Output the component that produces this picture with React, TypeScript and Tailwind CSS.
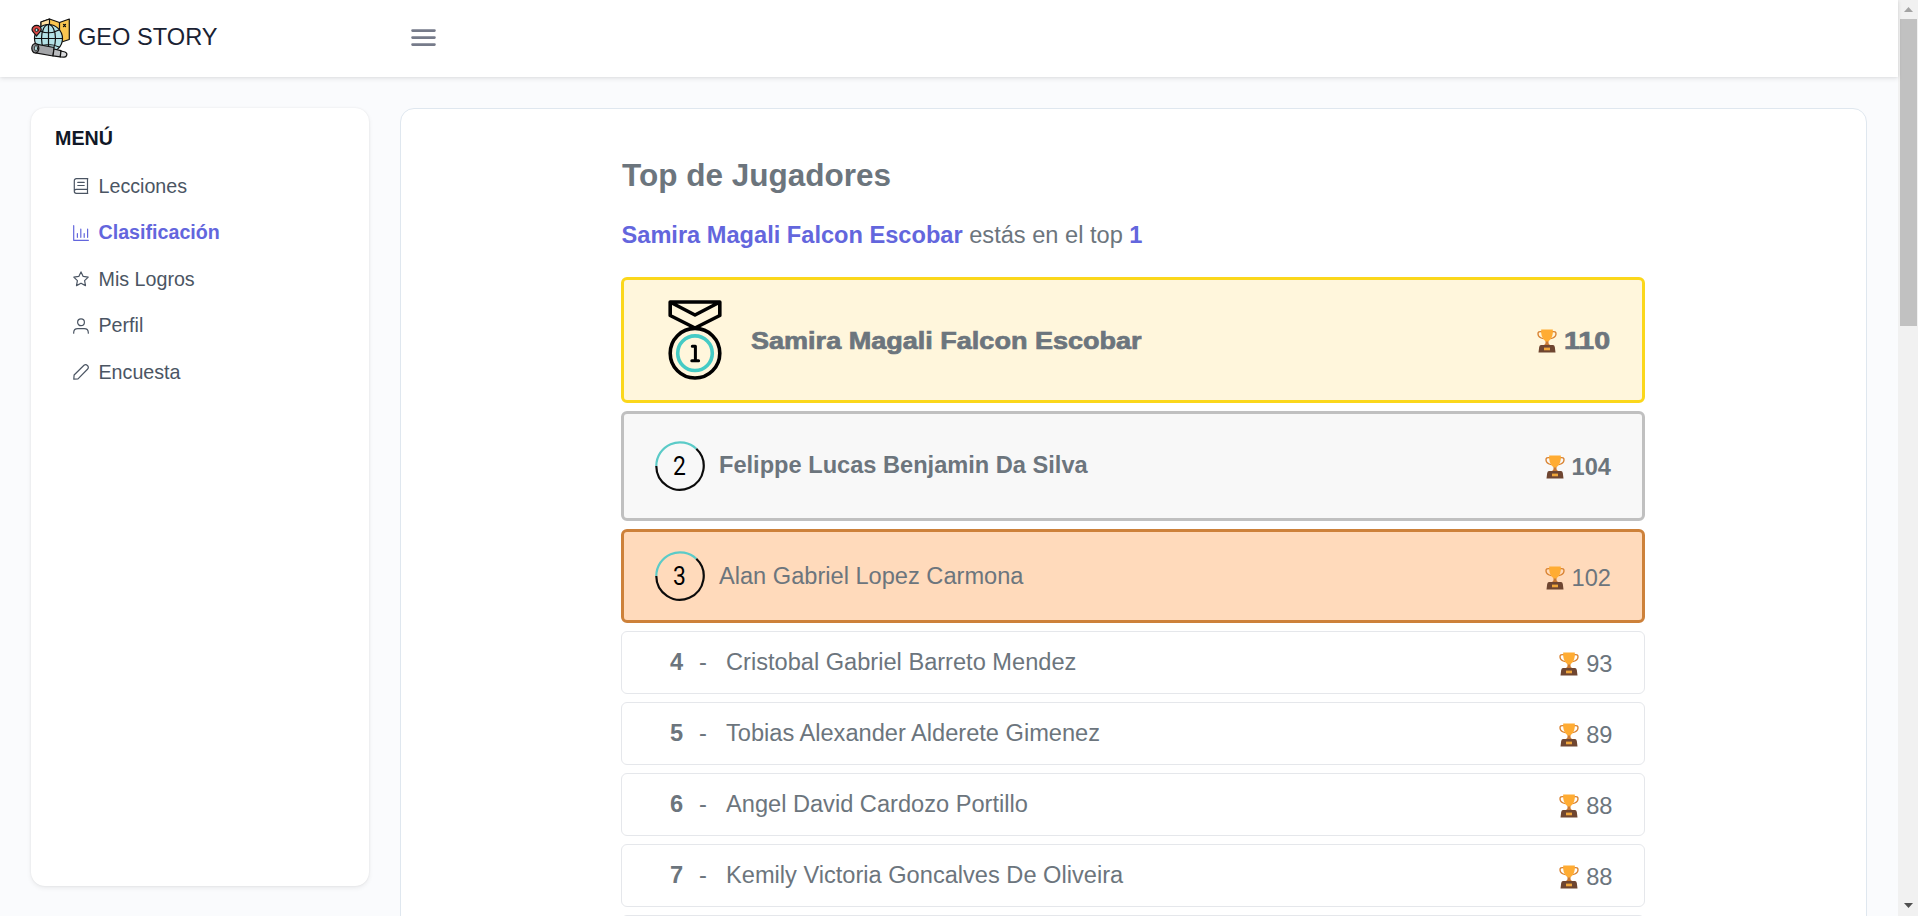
import type { ReactNode } from "react";

type Player = { name: string; score: number };

const rest: Player[] = [
  { name: "Cristobal Gabriel Barreto Mendez", score: 93 },
  { name: "Tobias Alexander Alderete Gimenez", score: 89 },
  { name: "Angel David Cardozo Portillo", score: 88 },
  { name: "Kemily Victoria Goncalves De Oliveira", score: 88 },
];

function Logo() {
  return (
    <svg className="h-[40px] w-[40px] shrink-0" viewBox="0 0 40 40" stroke="#111" strokeWidth="1.2" strokeLinejoin="round" strokeLinecap="round">
      <path d="M10 4 L18.500 1 L28.500 4.500 L38.300 1 V21.500 L29 24.500 L18 20 L10 20 Z" fill="#fac650" />
      <path d="M10 4 L18.500 1 V6 L10 9 Z" fill="#ffe0a0" />
      <path d="M28.500 4.500 V23" fill="none" />
      <path d="M32.500 6.500 l2 2 m0 -2 l-2 2" fill="none" />
      <circle cx="17.500" cy="20.500" r="14" fill="#b4e2e6" />
      <ellipse cx="17.500" cy="20.500" rx="7" ry="14" fill="none" />
      <path d="M17.500 6.500 V34 M3.500 20.500 H31.500 M7 12 Q17.500 17.500 28 12 M7 29 Q17.500 24 28 29" fill="none" />
      <path d="M5.500 18 C2.500 14.500 1 13 1 11.800 A4.600 4.400 0 0 1 10.200 11.800 C10.200 13 8.500 14.500 5.500 18 Z" fill="#dc4a45" />
      <circle cx="5.600" cy="12" r="1.600" fill="#b4e2e6" strokeWidth="0.900" />
      <path d="M4 25.800 L23 29.500 L22 38 L4.500 34.800 Z" fill="#a3a5a8" />
      <path d="M23 31 L30 32.600 L29.200 38.800 L22 37.800 Z" fill="#b9bbbe" />
      <path d="M30 33 L34 34 Q36.300 35 35.800 37 Q35.200 39.300 33 39.200 L29.300 38.800 Z" fill="#d9dadc" />
      <ellipse cx="4.300" cy="30.300" rx="3.500" ry="4.700" fill="#8b8e92" />
      <ellipse cx="5" cy="30.300" rx="1.500" ry="2.800" fill="#c3ecef" strokeWidth="0.800" />
    </svg>
  );
}

function Icon({ children }: { children: ReactNode }) {
  return (
    <svg className="h-4 w-4 shrink-0" viewBox="0 0 16 16" fill="none" stroke="currentColor" strokeWidth="1.2" strokeLinecap="round" strokeLinejoin="round">
      {children}
    </svg>
  );
}

const menu: { label: string; active?: boolean; icon: ReactNode }[] = [
  {
    label: "Lecciones",
    icon: (
      <path d="M14.800 0.700 H3.300 A2 2 0 0 0 1.300 2.700 V13.300 A2 2 0 0 0 3.300 15.300 H14.800 M14.500 0.700 V15.300 M1.600 12.200 Q2 11.300 3.300 11.300 H14.500 M4.800 4.400 H11.200 M4.800 7.500 H11.200" />
    ),
  },
  {
    label: "Clasificación",
    active: true,
    icon: <path d="M0.700 0.700 V15.300 H15.400 M4.400 8.500 V12.300 M7.800 4 V12.300 M11.200 8.500 V12.300 M14.600 4 V12.300" />,
  },
  {
    label: "Mis Logros",
    icon: <path d="M8 0.900 L10.200 5.400 L15.200 6.100 L11.600 9.600 L12.500 14.600 L8 12.200 L3.500 14.600 L4.400 9.600 L0.800 6.100 L5.800 5.400 Z" />,
  },
  {
    label: "Perfil",
    icon: (
      <>
        <circle cx="8" cy="4.300" r="3.400" />
        <path d="M0.700 15.200 V14.500 A4 4 0 0 1 4.700 10.700 H11.300 A4 4 0 0 1 15.300 14.500 V15.200" />
      </>
    ),
  },
  {
    label: "Encuesta",
    icon: <path d="M0.800 15.200 L1.100 11 L11 1.300 Q12.800 0 14.600 1.700 Q16 3.300 14.700 5 L5 14.800 Z" />,
  },
];

function Trophy() {
  return (
    <svg className="h-6 w-5 shrink-0" viewBox="0 0 20 24">
      <path d="M5 2.800 Q0.800 2 1 5 Q1.300 8.800 6.500 9.600 M15 2.800 Q19.200 2 19 5 Q18.700 8.800 13.500 9.600" fill="none" stroke="#d98332" strokeWidth="1.400" />
      <path d="M8.500 10 H11.500 V14 Q11.500 15 13 16 H7 Q8.500 15 8.500 14 Z" fill="#c97a35" />
      <path d="M4.200 0.500 H15.800 Q16.500 8.500 11.800 12 Q10 13 8.200 12 Q3.500 8.500 4.200 0.500 Z" fill="#ffac33" />
      <path d="M4 16 H16 Q17.500 16 17.800 18 L18.500 23.500 H1.500 L2.200 18 Q2.500 16 4 16 Z" fill="#6f4631" />
      <rect x="7" y="18.600" width="6" height="2.700" fill="#f0a63a" />
    </svg>
  );
}

function Medal() {
  return (
    <svg className="h-[80px] w-[54px] shrink-0" viewBox="0 0 54 80" fill="none" stroke="#000" strokeWidth="3.600">
      <path d="M2.200 2 H51.800 V15.500 L27 28 L2.200 15.500 Z M3 2.500 L27 15 L51 2.500" strokeLinejoin="round" />
      <circle cx="27" cy="53.200" r="24.800" />
      <circle cx="27" cy="53.200" r="17.300" stroke="#45cbc5" />
      <path d="M24.300 46.300 H27.400 V60.500 M23.800 60.800 H30.600" strokeLinejoin="round" strokeLinecap="round" strokeWidth="3" />
    </svg>
  );
}

function Ring({ n }: { n: number }) {
  return (
    <div className="relative flex h-[50px] w-[50px] shrink-0 items-center justify-center">
      <svg className="absolute inset-0" viewBox="0 0 50 50" width="50" height="50" fill="none" strokeWidth="2.200">
        <path d="M1.300 25 A23.700 23.700 0 0 1 41.300 7.800" stroke="#5bcbc8" />
        <path d="M41.300 7.800 A23.700 23.700 0 1 1 1.300 25" stroke="#0c0c0c" />
      </svg>
      <span className="scale-x-[0.88] font-[Roboto,sans-serif] text-[26px] leading-none font-normal text-black">{n}</span>
    </div>
  );
}

function Score({ value, className = "" }: { value: number; className?: string }) {
  return (
    <div className={`flex items-center gap-[7px] ${className}`}>
      <Trophy />
      <span className="pt-px">{value}</span>
    </div>
  );
}

export default function App() {
  return (
    <div className="flex h-[916px] w-[1918px] overflow-hidden bg-[#fafbfd] font-['Liberation_Sans',Arial,sans-serif] text-[23.625px] leading-none text-[#6c757d]">
      <div className="flex min-w-0 flex-1 flex-col">
        <header className="z-10 flex h-[77px] shrink-0 items-center bg-white pl-[31px] shadow-[0_2px_5px_rgba(0,0,0,0.08),0_0_3px_rgba(0,0,0,0.08)]">
          <div className="flex w-[380px] items-center gap-[7px] pb-[2px] text-[#1a2233]">
            <Logo />
            <span>GEO STORY</span>
          </div>
          <svg className="h-6 w-[25px] text-[#767b8a]" viewBox="0 0 25 24" stroke="currentColor" strokeWidth="2.600" strokeLinecap="round">
            <path d="M1.500 3.600 H23.500 M1.500 10.600 H23.500 M1.500 17.600 H23.500" />
          </svg>
        </header>

        <div className="flex min-h-0 flex-1 items-start">
          <aside className="mt-[31px] ml-[31px] h-[778px] w-[338px] shrink-0 rounded-[14px] bg-white pl-6 text-[19.6875px] shadow-[0_2px_5px_rgba(0,0,0,0.07),0_0_2px_rgba(0,0,0,0.08)]">
            <h2 className="mt-[21px] h-[21px] text-[19.6875px] font-bold text-[#111827]">MENÚ</h2>
            <ul className="mt-[13px] pl-[17.5px]">
              {menu.map((m) => (
                <li key={m.label} className={`flex h-[46.5px] items-center gap-[10px] ${m.active ? "font-bold text-[#6366dd]" : "text-[#4b5563]"}`}>
                  <Icon>{m.icon}</Icon>
                  <span className="pt-px">{m.label}</span>
                </li>
              ))}
            </ul>
          </aside>

          <main className="mt-[31px] ml-[31px] h-[900px] w-[1467px] rounded-[14px] border border-[#dfe7ef] bg-white pt-[50px]">
            <div className="ml-[220px] w-[1024px]">
              <h1 className="pl-px text-[31.5px] leading-[32px] font-bold">Top de Jugadores</h1>
              <p className="mt-[32px] h-[54px] pl-[0.5px] leading-[24px]">
                <b className="text-[#6366dd]">Samira Magali Falcon Escobar</b> estás en el top <b className="text-[#6366dd]">1</b>
              </p>
              <div className="flex flex-col gap-2">
                <div className="flex h-[126px] items-center rounded-[6px] border-3 border-[#fbd71b] bg-[#fff6dc] pr-[31px] pl-[44px] font-bold">
                  <Medal />
                  <span className="ml-[29px] origin-left scale-x-[1.145] pt-[3px] [-webkit-text-stroke:0.7px_#6c757d]">Samira Magali Falcon Escobar</span>
                  <Score value={110} className="ml-auto pt-[2px] [&>span]:w-[47px] [&>span]:origin-left [&>span]:scale-x-[1.21] [&>span]:[-webkit-text-stroke:0.7px_#6c757d]" />
                </div>
                <div className="flex h-[110px] items-center rounded-[6px] border-3 border-[#c0c0c0] bg-[#f8f8f8] pr-[31px] pl-[30.5px] font-bold">
                  <Ring n={2} />
                  <span className="ml-[14.5px]">Felippe Lucas Benjamin Da Silva</span>
                  <Score value={104} className="ml-auto pt-[2px]" />
                </div>
                <div className="flex h-[94px] items-center rounded-[6px] border-3 border-[#cd813a] bg-[#ffdabb] pr-[31px] pl-[30.5px]">
                  <Ring n={3} />
                  <span className="ml-[14.5px] pt-px">Alan Gabriel Lopez Carmona</span>
                  <Score value={102} className="ml-auto pt-[4px]" />
                </div>
                {rest.map((p, i) => (
                  <div key={p.name} className="flex h-[63px] items-center rounded-[6px] border border-[#e5e7eb] pr-[31.5px] pl-[48px]">
                    <b className="w-[29px]">{i + 4}</b>
                    <span className="w-[27px]">-</span>
                    <span>{p.name}</span>
                    <Score value={p.score} className="ml-auto pt-[3px]" />
                  </div>
                ))}
                <div className="h-[63px] rounded-[6px] border border-[#e5e7eb]" />
              </div>
            </div>
          </main>
        </div>
      </div>

      <div className="flex w-5 shrink-0 flex-col items-center bg-[#f1f1f1]">
        <svg className="h-[19px] w-[17px] shrink-0" viewBox="0 0 17 19">
          <path d="M4 12 L8.500 7 L13 12 Z" fill="#a3a3a3" />
        </svg>
        <div className="h-[307px] w-[17px] bg-[#c1c1c1]" />
        <svg className="mt-auto h-[19px] w-[17px] shrink-0" viewBox="0 0 17 19">
          <path d="M4 6 L8.500 11 L13 6 Z" fill="#505050" />
        </svg>
      </div>
    </div>
  );
}
